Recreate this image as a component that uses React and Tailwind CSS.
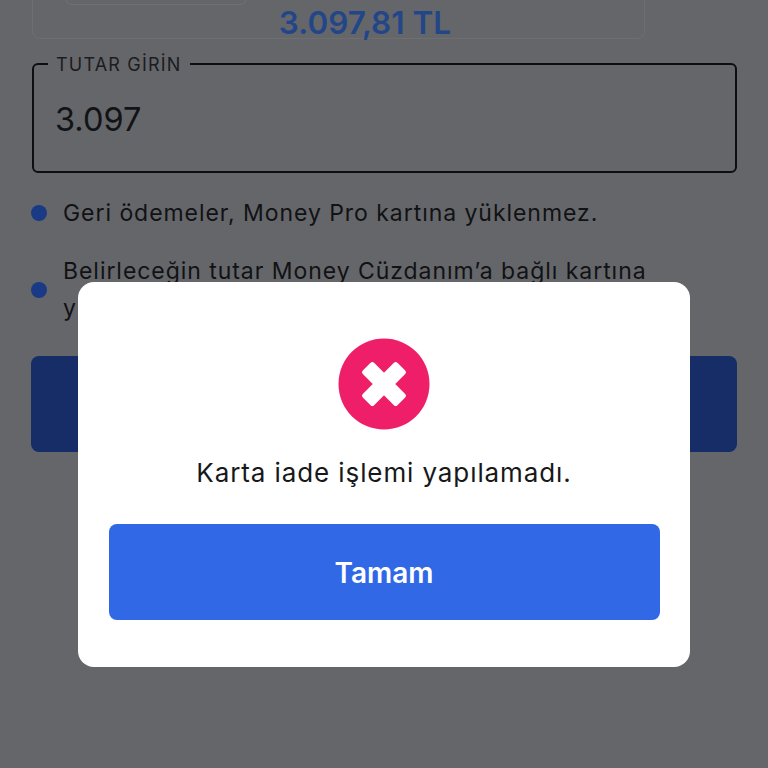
export default function App() {
  return (
    <div className="relative h-[768px] w-[768px] overflow-hidden bg-[#65666a] font-['Inter',sans-serif] text-[#111214]">
      <div className="relative ml-8 flex h-[39px] w-[613px] flex-col items-center justify-start rounded-b-lg border border-t-0 border-[#6d6e72] pl-[53px] pt-[4px]">
        <div className="absolute left-[33px] top-0 h-[5px] w-[180px] rounded-b-xl border border-t-0 border-[#6f7074]" />
        <span className="text-[31.5px] leading-[38px] font-semibold text-[#234689]">3.097,81 TL</span>
      </div>
      <fieldset className="mx-8 mt-[13px] h-[121px] w-[705px] rounded-md border-2 border-[#0d0e10] pl-[14px] pr-[14px]">
        <legend className="px-2 pt-[2px] text-[18px] leading-[22px] tracking-[1.2px] text-[#1b1c1f]">TUTAR GİRİN</legend>
        <div className="pl-[7px] pt-[24px] text-[32.5px] leading-[40px] text-[#121316]">3.097</div>
      </fieldset>
      <div className="mt-[25px] ml-[31px] flex items-center gap-[16px]">
        <span className="h-4 w-4 shrink-0 rounded-full bg-[#1b3a85]" />
        <span className="text-[23px] leading-[30px] tracking-[0.95px]">Geri ödemeler, Money Pro kartına yüklenmez.</span>
      </div>
      <div className="mt-[25px] ml-[31px] flex w-[660px] items-center gap-[16px]">
        <span className="h-4 w-4 shrink-0 rounded-full bg-[#1b3a85]" />
        <span className="text-[23px] leading-[37px] tracking-[0.95px]">Belirleceğin tutar Money Cüzdanım’a bağlı kartına yüklenir.</span>
      </div>
      <div className="mt-[29px] ml-[31px] h-[96px] w-[706px] rounded-lg bg-[#162d68]" />

      <div className="absolute left-[78px] top-[282px] flex h-[385px] w-[612px] flex-col items-center rounded-2xl bg-white px-[31px] pt-[56px]">
        <svg width="92" height="92" viewBox="0 0 92 92" aria-hidden="true">
          <circle cx="46" cy="46" r="45.5" fill="#ee1e68" />
          <rect x="21.5" y="38" width="49" height="16" rx="2.5" fill="#fff" transform="rotate(45 46 46)" />
          <rect x="21.5" y="38" width="49" height="16" rx="2.5" fill="#fff" transform="rotate(-45 46 46)" />
        </svg>
        <p className="mt-[25px] text-[26px] leading-[36px] tracking-[0.9px] text-[#17181a]">Karta iade işlemi yapılamadı.</p>
        <button className="mt-[33px] h-[96px] w-[551px] rounded-lg bg-[#3068e6] pt-[2px] text-[28px] font-semibold text-white">Tamam</button>
      </div>
    </div>
  );
}
